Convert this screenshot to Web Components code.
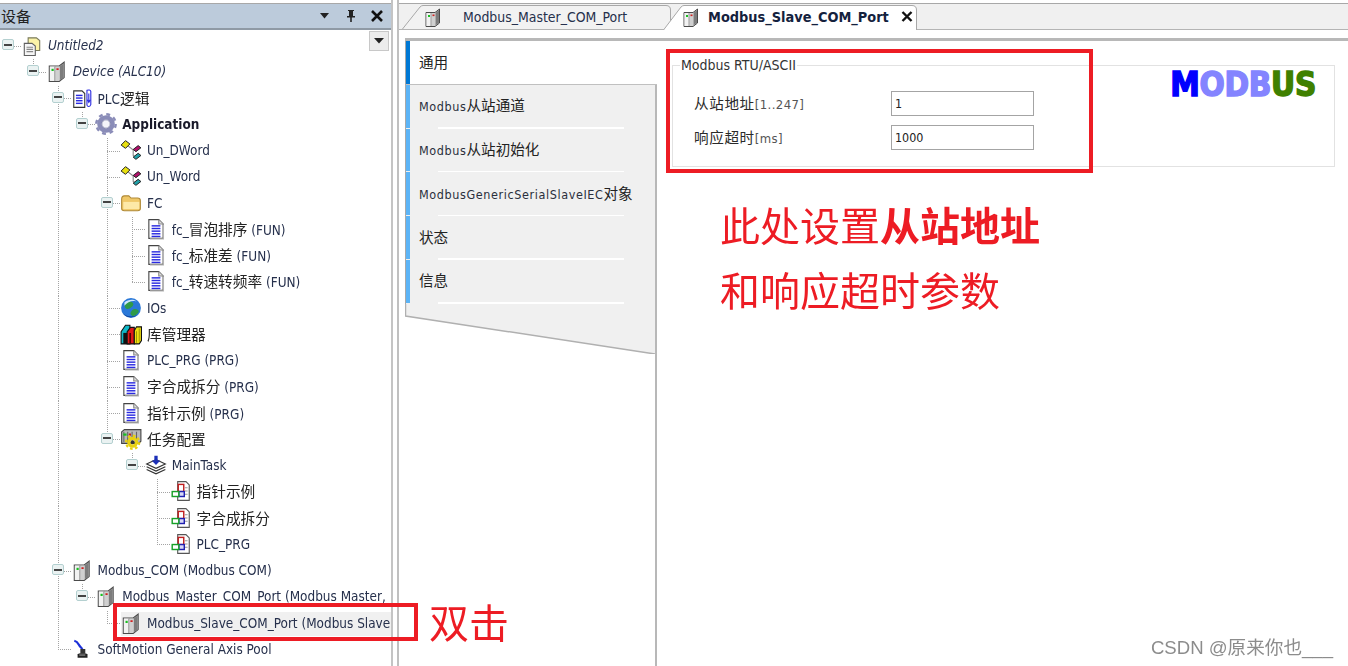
<!DOCTYPE html>
<html lang="zh">
<head>
<meta charset="utf-8">
<title>Modbus_Slave_COM_Port</title>
<style>
  html, body { margin: 0; height: 666px; overflow: hidden; background: #fff; }
  body { font-family: "DejaVu Sans Condensed", "DejaVu Sans", "Noto Sans CJK SC", sans-serif; font-stretch: condensed; color: #222; position: relative; }
</style>
</head>
<body>
<app-shell>
  <device-panel slot="left" heading="设备">
    <device-tree>
      <tree-row level="0" icon="project" open italic>Untitled2</tree-row>
      <tree-row level="1" icon="device" open italic>Device (ALC10)</tree-row>
      <tree-row level="2" icon="logic" open>PLC<span>逻辑</span></tree-row>
      <tree-row level="3" icon="gear" open bold>Application</tree-row>
      <tree-row level="4" icon="union">Un_DWord</tree-row>
      <tree-row level="4" icon="union">Un_Word</tree-row>
      <tree-row level="4" icon="folder" open>FC</tree-row>
      <tree-row level="5" icon="page">fc_<span>冒泡排序</span> (FUN)</tree-row>
      <tree-row level="5" icon="page">fc_<span>标准差</span> (FUN)</tree-row>
      <tree-row level="5" icon="page">fc_<span>转速转频率</span> (FUN)</tree-row>
      <tree-row level="4" icon="globe">IOs</tree-row>
      <tree-row level="4" icon="books"><span>库管理器</span></tree-row>
      <tree-row level="4" icon="page">PLC_PRG (PRG)</tree-row>
      <tree-row level="4" icon="page"><span>字合成拆分</span> (PRG)</tree-row>
      <tree-row level="4" icon="page"><span>指针示例</span> (PRG)</tree-row>
      <tree-row level="4" icon="taskcfg" open><span>任务配置</span></tree-row>
      <tree-row level="5" icon="task" open>MainTask</tree-row>
      <tree-row level="6" icon="call"><span>指针示例</span></tree-row>
      <tree-row level="6" icon="call"><span>字合成拆分</span></tree-row>
      <tree-row level="6" icon="call">PLC_PRG</tree-row>
      <tree-row level="2" icon="device" open>Modbus_COM (Modbus COM)</tree-row>
      <tree-row level="3" icon="device" open>Modbus_Master_COM_Port (Modbus Master,</tree-row>
      <tree-row level="4" icon="device" selected>Modbus_Slave_COM_Port (Modbus Slave</tree-row>
      <tree-row level="2" icon="axis">SoftMotion General Axis Pool</tree-row>
    </device-tree>
  </device-panel>

  <editor-pane slot="right">
    <editor-tab slot="tabs" width="270" icon-gap="22">Modbus_Master_COM_Port</editor-tab>
    <editor-tab slot="tabs" width="255" icon-gap="19" active>Modbus_Slave_COM_Port</editor-tab>
    <side-nav slot="nav">
      <nav-item active><span>通用</span></nav-item>
      <nav-item>Modbus<span>从站通道</span></nav-item>
      <nav-item>Modbus<span>从站初始化</span></nav-item>
      <nav-item>ModbusGenericSerialSlaveIEC<span>对象</span></nav-item>
      <nav-item><span>状态</span></nav-item>
      <nav-item><span>信息</span></nav-item>
    </side-nav>
    <settings-group legend="Modbus RTU/ASCII">
      <field-row value="1"><span>从站地址</span>[1..247]</field-row>
      <field-row value="1000"><span>响应超时</span>[ms]</field-row>
    </settings-group>
  </editor-pane>
</app-shell>

<mark-frame box="666,49,427,124"></mark-frame>
<mark-frame box="113,603,305,38"></mark-frame>
<mark-text at="720,200">此处设置<b>从站地址</b></mark-text>
<mark-text at="720,265">和响应超时参数</mark-text>
<mark-text at="429,597">双击</mark-text>
<water-mark>CSDN @原来你也___</water-mark>

<script>
const deviceIcon = `
  <path d="M3 5.500 12 5.500 16.500 2 16.500 16 12 19.500 3 19.500Z" fill="#dcdcdc" stroke="#4a4a4a"/>
  <path d="M3.500 6H8V19H3.500Z" fill="#f2f2f2"/><path d="M8.500 6H12V19H8.500Z" fill="#d0d0d0"/>
  <path d="M12.500 5.800 16 3V15.800L12.500 18.600Z" fill="#7c7c7c"/>
  <path d="M8 6V19" stroke="#9a9a9a"/>
  <rect x="5" y="8" width="2" height="2" fill="#18c020"/><rect x="9.500" y="7.500" width="2" height="1.600" fill="#d02020"/>`;
const pageLines = (x, y, n, w) => {
  let s = '';
  for (let i = 0; i < n; i++) s += `<rect x="${x}" y="${y + i * 2.4}" width="${w}" height="1.3" fill="#2a2ae0"/>`;
  return s;
};
const icons = {
  project: `<path d="M6.500 3.500H14L17 6V15H6.500Z" fill="#fbf3a8" stroke="#7a7a5a"/>
    <path d="M3 8.500H10L13 11V19.500H3Z" fill="#f6f6f6" stroke="#606060"/>
    <path d="M5 12H11M5 14H11M5 16H11" stroke="#888"/>`,
  device: deviceIcon,
  logic: `<path d="M2.500 3.500H10L12.500 6V18.500H2.500Z" fill="#fff" stroke="#333"/>${pageLines(4.5, 7, 4, 6)}
    <path d="M14.500 3C16 2.500 17.500 2.500 18 4V16C17 18.500 15 18 14.500 16.500Z" fill="#fff" stroke="#2a2ae0"/>
    <path d="M16.200 6V13M14.800 11.500 16.200 14 17.600 11.500" fill="none" stroke="#2a2ae0"/>`,
  gear: `<circle cx="10" cy="10" r="6" fill="none" stroke="#8a8cb8" stroke-width="4"/>
    <circle cx="10" cy="10" r="8.800" fill="none" stroke="#8a8cb8" stroke-width="2.200" stroke-dasharray="3.500 3.410"/>
    <circle cx="10" cy="10" r="3.800" fill="#f4f4fa" stroke="#666a96" stroke-width=".6"/>`,
  union: `<path d="M7 6 12 10M12 10V15L15 17" fill="none" stroke="#888"/>
    <path d="M1 5.500 5 1.500 9 4.500 5 8.500Z" fill="#e8e010" stroke="#222" stroke-width=".9"/>
    <path d="M12 9.500 16.500 6 19 8 14.500 11.500Z" fill="#b0106a" stroke="#222" stroke-width=".9"/>
    <path d="M12 16.500 16.500 13 19 15 14.500 18.500Z" fill="#20a0a8" stroke="#222" stroke-width=".9"/>`,
  folder: `<path d="M1.500 6.500C1.500 4.500 2.500 3.500 4 3.500H8L10 5.500H16C17.500 5.500 18.500 6.500 18.500 8V15C18.500 16.500 17.500 17 16 17H4C2.500 17 1.500 16.500 1.500 15Z" fill="#f0c868" stroke="#b08a38"/>
    <path d="M3 9H17.500V15.500H3Z" fill="#fde9a8"/>`,
  page: `<path d="M3.500 1.500H12.500L16.500 5.500V18.500H3.500Z" fill="#fff" stroke="#444"/>
    <path d="M12.500 1.500V5.500H16.500" fill="#ddd" stroke="#888"/>
    <path d="M16.800 6V19H4.500" fill="none" stroke="#b4b4b4"/>${pageLines(6, 6.500, 5, 8)}`,
  globe: `<circle cx="10" cy="10" r="9" fill="#2a78d8"/>
    <path d="M5 5C8 3 11 4 12 6S9 11 7 11 3 8 5 5ZM11 12C13 10 17 11 17 13S13 18 11 17 9 14 11 12Z" fill="#2f9a48"/>
    <path d="M4 5C7 2 13 2 15 4 11 3 7 4 4 8Z" fill="#cfe8ff"/>
    <path d="M2 14C5 18 12 19 16 16 13 19 6 20 2 14Z" fill="#0d3c90"/>`,
  books: `<path d="M1 8 5 2H9V19H1Z" fill="#0fb8c8" stroke="#111"/>
    <path d="M3 9H6.500V19H3Z" fill="#111"/>
    <path d="M6.500 8 9.500 4H13V19H6.500Z" fill="#e01818" stroke="#111"/>
    <path d="M8.500 9H10V19H8.500Z" fill="#500"/>
    <path d="M13 7 15 3.500H19.500V16L17.500 19H13Z" fill="#f0e010" stroke="#111"/>
    <path d="M15 7.500V18M17.500 5V17" stroke="#8a8000" stroke-width=".7"/>`,
  taskcfg: `<path d="M1.500 3.500 4 1.500H19V12L17 14H1.500Z" fill="#b8b8b8" stroke="#444"/>
    <path d="M3.500 3.500V13M7 3.500V13M11 3.500V13M15 3.500V13" stroke="#666"/>
    <rect x="3" y="5" width="3" height="2" fill="#18c020"/><rect x="8" y="5" width="2" height="2" fill="#c02020"/>
    <circle cx="11.500" cy="13" r="3.500" fill="none" stroke="#e8d010" stroke-width="3"/>
    <circle cx="11.500" cy="13" r="6" fill="none" stroke="#e8d010" stroke-width="2" stroke-dasharray="2.400 2.300"/>
    <circle cx="11.500" cy="13" r="1.700" fill="#333"/>`,
  task: `<path d="M1.500 9 10 5 18.500 9 10 13Z" fill="#fff" stroke="#333"/>
    <path d="M1.500 11.500 10 15.500 18.500 11.500M1.500 14 10 18 18.500 14" fill="none" stroke="#333"/>
    <path d="M8.500 1.500H11.500V6H14L10 10 6 6H8.500Z" fill="#1c30b8"/>`,
  call: `<path d="M7 1.500H14.500L17.500 4.500V18.500H7Z" fill="#fff" stroke="#555"/>
    <path d="M13.500 7H16M13.500 10H16M13.500 13H16" stroke="#999"/>
    <rect x="7.500" y="4" width="5" height="6.500" fill="#fff" stroke="#c02020" stroke-width="1.300"/>
    <rect x="8" y="10.500" width="5" height="4.500" fill="#d8d8f8" stroke="#2020b0" stroke-width="1.300"/>
    <rect x="2" y="10.500" width="6" height="4.500" fill="#fff" stroke="#18a028" stroke-width="1.300"/>`,
  axis: `<path d="M3 2.500C5 3 6 4 7 6S9.500 9 10.500 10" fill="none" stroke="#1c30d8" stroke-width="2"/>
    <path d="M8.500 10H13V14H8.500Z" fill="#333"/><path d="M6 15C6 13.500 15 13.500 15 15V18H6Z" fill="#222"/>
    <path d="M7.500 15.500H13" stroke="#999"/>`
};

class AppShell extends HTMLElement {
  constructor() {
    super();
    this.attachShadow({ mode: 'open' }).innerHTML = `
      <style>
        :host { display: flex; height: 666px; filter: blur(.42px); }
        .left { width: 393px; flex: none; }
        .right { flex: 1; min-width: 0; }
      </style>
      <div class="left"><slot name="left"></slot></div>
      <div class="right"><slot name="right"></slot></div>`;
  }
}

class DevicePanel extends HTMLElement {
  constructor() {
    super();
    this.attachShadow({ mode: 'open' }).innerHTML = `
      <style>
        :host { display: flex; flex-direction: column; height: 666px; box-sizing: border-box; border-right: 2px solid #c4c4c4; background: #fff; overflow: hidden; }
        .title { height: 27px; margin-top: 3px; flex: none; display: flex; align-items: center; box-sizing: border-box;
                 background: #bccbdb; border-top: 1px solid #a8a8a8; border-bottom: 2px solid #8f9aa5; padding: 0 1px 1px 1px; font-size: 15px; color: #222; font-family: "Noto Sans CJK SC", sans-serif; }
        .name { flex: 1; }
        .btn { width: 26px; display: flex; justify-content: center; }
        .tree { flex: 1; position: relative; padding-top: 3px; }
        .drop { position: absolute; top: 1px; right: 2px; width: 20px; height: 20px; box-sizing: border-box; background: #ececec; border: 1px solid #c8c8c8;
                display: flex; align-items: center; justify-content: center; }
      </style>
      <div class="title">
        <span class="name"></span>
        <span class="btn"><svg width="12" height="8" viewBox="0 0 12 8"><path d="M1 1H10L5.500 6.500Z" fill="#222"/></svg></span>
        <span class="btn"><svg width="12" height="14" viewBox="0 0 12 14"><path d="M3 1H9V2H8V7H10V8.500H6.800V13H5.200V8.500H2V7H4V2H3Z" fill="#222"/></svg></span>
        <span class="btn"><svg width="14" height="12" viewBox="0 0 14 12"><path d="M2 1 12 11M12 1 2 11" stroke="#111" stroke-width="2.600"/></svg></span>
      </div>
      <div class="tree">
        <slot></slot>
        <div class="drop"><svg width="12" height="8" viewBox="0 0 12 8"><path d="M1 1H11L6 6.500Z" fill="#222"/></svg></div>
      </div>`;
    this.shadowRoot.querySelector('.name').textContent = this.getAttribute('heading');
  }
}

class DeviceTree extends HTMLElement {
  constructor() {
    super();
    this.attachShadow({ mode: 'open' }).innerHTML = `<style>:host { display: block; }</style><slot></slot>`;
  }
  connectedCallback() {
    const rows = [...this.querySelectorAll('tree-row')];
    const lvl = rows.map(r => +r.getAttribute('level'));
    // does level l carry on below row i
    const continues = (i, l) => {
      for (let j = i + 1; j < rows.length; j++) {
        if (lvl[j] < l) return false;
        if (lvl[j] === l) return true;
      }
      return false;
    };
    const dotV = 'repeating-linear-gradient(#a4a4a4 0 1px,transparent 1px 2px)';
    const dotH = 'repeating-linear-gradient(90deg,#a4a4a4 0 1px,transparent 1px 2px)';
    rows.forEach((row, i) => {
      const l = lvl[i];
      const imgs = [], pos = [], size = [];
      const add = (img, p, s) => { imgs.push(img); pos.push(p); size.push(s); };
      const cx = a => Math.round(8 + a * 24.75);
      for (let a = 1; a < l; a++) {
        if (continues(i, a)) add(dotV, `${cx(a)}px 0`, '1px 100%');
      }
      if (l > 0) add(dotV, `${cx(l)}px 0`, continues(i, l) ? '1px 100%' : '1px 50%');
      add(dotH, `${cx(l)}px 50%`, '13px 1px');
      row.style.backgroundImage = imgs.join(',');
      row.style.backgroundPosition = pos.join(',');
      row.style.backgroundSize = size.join(',');
      row.style.backgroundRepeat = 'no-repeat';
    });
  }
}

const rowTemplate = document.createElement('template');
rowTemplate.innerHTML = `
  <style>
    :host { display: block; height: 26.25px; font-size: 13.45px; line-height: 16px; color: #26304c; white-space: nowrap; }
    .row { height: 100%; display: flex; align-items: center; box-sizing: border-box; padding-left: calc(var(--level) * 24.75px + 2px); }
    .exp { width: 20px; flex: none; display: flex; }
    .box { width: 12px; height: 11px; box-sizing: border-box; border: 1px solid #b4d0d0; border-radius: 2px; background: #eaf2f2; display: flex; align-items: center; justify-content: center; margin-top: -3px; }
    .box i { display: block; width: 8px; height: 2px; background: #444; }
    :host(:not([open])) .box { visibility: hidden; }
    .main { flex: 1; height: 24px; display: flex; align-items: center; min-width: 0; }
    :host([selected]) .main { background: #f0f0f0; }
    svg { width: 22px; height: 22px; flex: none; margin: -2px -1px 0; }
    .label { margin-left: 6px; }
    :host([italic]) .label { font-style: italic; }
    :host([bold]) .label { font-weight: bold; color: #1a1a2a; }
    ::slotted(span) { font-size: 14.7px; color: #222; line-height: 16px; font-family: "Noto Sans CJK SC", sans-serif; }
  </style>
  <div class="row">
    <span class="exp"><span class="box"><i></i></span></span>
    <span class="main"><svg viewBox="0 0 20 20"></svg><span class="label"><slot></slot></span></span>
  </div>`;

class TreeRow extends HTMLElement {
  constructor() {
    super();
    this.attachShadow({ mode: 'open' }).appendChild(rowTemplate.content.cloneNode(true));
    this.shadowRoot.querySelector('svg').innerHTML = icons[this.getAttribute('icon')] || '';
    this.style.setProperty('--level', this.getAttribute('level'));
  }
}

class EditorPane extends HTMLElement {
  constructor() {
    super();
    this.attachShadow({ mode: 'open' }).innerHTML = `
      <style>
        :host { display: flex; flex-direction: column; height: 666px; margin-left: 4px; box-sizing: border-box; border-left: 2px solid #c0c0c0; background: #fff; }
        .tabs { height: 25px; margin-top: 3px; flex: none; display: flex; align-items: stretch; padding-left: 3px; box-sizing: content-box;
                background: #f0f0f0; border-top: 1px solid #a8a8a8; border-bottom: 1px solid #b4b4b4; }
        .body { flex: 1; display: flex; flex-direction: column; padding: 8px 0 0 6px; min-height: 0; }
        .inner { flex: 1; display: flex; border-top: 3px solid #b8b8b8; min-height: 0; }
        .form { flex: 1; padding: 16px 13px 0 15px; min-width: 0; }
      </style>
      <div class="tabs"><slot name="tabs"></slot></div>
      <div class="body"><div class="inner">
        <slot name="nav"></slot>
        <div class="form"><slot></slot></div>
      </div></div>`;
  }
}

class EditorTab extends HTMLElement {
  constructor() {
    super();
    const w = +this.getAttribute('width');
    const active = this.hasAttribute('active');
    const fill = active ? '#fff' : '#f2f2f2';
    this.attachShadow({ mode: 'open' }).innerHTML = `
      <style>
        :host { display: flex; align-items: center; position: relative; flex: none; height: 25px; width: ${w}px; font-size: 13.9px; color: #26304c; }
        :host([active]) { margin-left: -9px; z-index: 1; font-size: 14.4px; font-weight: bold; color: #14213d; }
        .shape { position: absolute; left: 0; top: 0; }
        .icon { position: relative; width: 20px; height: 20px; margin-left: ${this.getAttribute('icon-gap') - 1}px; flex: none; }
        .text { position: relative; margin-left: ${active ? 7 : 20}px; }
        .close { position: relative; margin-left: 12px; }
      </style>
      <svg class="shape" width="${w}" height="26" viewBox="0 0 ${w} 26">
        <path d="M0.500 ${active ? 26 : 25}L18 3Q19.500 1.500 21 1.500H${w - 6}Q${w - 1.500} 1.500 ${w - 1.500} 6V${active ? 26 : 25}" fill="${fill}" stroke="#a8a8a8"/>
      </svg>
      <svg class="icon" viewBox="0 0 20 20">${deviceIcon}</svg>
      <span class="text"><slot></slot></span>
      ${active ? '<svg class="close" width="12" height="11" viewBox="0 0 12 11"><path d="M1.500 1 10.500 10M10.500 1 1.500 10" stroke="#111" stroke-width="2.400"/></svg>' : ''}`;
  }
}

class SideNav extends HTMLElement {
  constructor() {
    super();
    this.attachShadow({ mode: 'open' }).innerHTML = `
      <style>
        :host { display: flex; flex-direction: column; width: 252px; flex: none; }
        .list { border-left: 1px solid #a8a8a8; }
        svg { display: block; flex: none; }
        .rest { flex: 1; margin-left: 250px; border-right: 2px solid #b8b8b8; }
      </style>
      <div class="list"><slot></slot></div>
      <svg width="252" height="50" viewBox="0 0 252 50">
        <path d="M.5 0V12L250 50V0Z" fill="#f0f0f0"/>
        <path d="M.5 0V12L250 50" fill="none" stroke="#b0b0b0" stroke-width="1.500"/>
        <path d="M251 0V50" stroke="#b8b8b8" stroke-width="2"/>
      </svg>
      <div class="rest"></div>`;
  }
}

class NavItem extends HTMLElement {
  constructor() {
    super();
    this.attachShadow({ mode: 'open' }).innerHTML = `
      <style>
        :host { display: flex; flex-direction: column; height: 43.75px; box-sizing: border-box; font-size: 12.5px; color: #2a2f3c; white-space: nowrap;
                background: linear-gradient(#5cb4f6, #5cb4f6) left top / 4px calc(100% - 1px) no-repeat, #f0f0f0; border-right: 2px solid #b8b8b8; }
        :host([active]) { background: linear-gradient(#0078d4, #0078d4) left top / 4px 100% no-repeat, #fff; border-right: none; border-bottom: 1px solid #c0c0c0; }
        .text { flex: 1; display: flex; align-items: center; padding: 0 0 2px 13px; letter-spacing: .6px; }
        .sep { height: 1.500px; width: 186px; margin-left: 32px; background: #fff; flex: none; }
        :host([active]) .sep { display: none; }
        ::slotted(span) { font-size: 14.6px; letter-spacing: 0; color: #222; font-family: "Noto Sans CJK SC", sans-serif; }
      </style>
      <div class="text"><span><slot></slot></span></div>
      <div class="sep"></div>`;
  }
}

class SettingsGroup extends HTMLElement {
  constructor() {
    super();
    this.attachShadow({ mode: 'open' }).innerHTML = `
      <style>
        :host { display: block; }
        fieldset { height: 110px; box-sizing: border-box; margin: 0; padding: 18px 18px 0 21px; border: 1.500px solid #e2e2e2; display: flex; justify-content: space-between; align-items: flex-start; }
        legend { font-size: 14px; line-height: 16px; padding: 0 1px; margin-left: -14px; color: #333; }
        .rows { display: flex; flex-direction: column; gap: 9px; }
        .logo { font-size: 33px; line-height: 26px; height: 26px; font-weight: bold; letter-spacing: -.3px; -webkit-text-stroke: 1.400px currentColor; margin-top: -19px; }
        .m { color: #0000ff; } .o { color: #8484ff; } .u { color: #3f8000; }
      </style>
      <fieldset>
        <legend></legend>
        <div class="rows"><slot></slot></div>
        <div class="logo"><span class="m">M</span><span class="o">ODB</span><span class="u">US</span></div>
      </fieldset>`;
    this.shadowRoot.querySelector('legend').textContent = this.getAttribute('legend');
  }
}

class FieldRow extends HTMLElement {
  constructor() {
    super();
    this.attachShadow({ mode: 'open' }).innerHTML = `
      <style>
        :host { display: flex; align-items: center; height: 25px; font-size: 13px; color: #555; }
        .label { width: 197px; flex: none; padding-bottom: 3px; box-sizing: border-box; letter-spacing: .4px; }
        ::slotted(span) { font-size: 14.6px; letter-spacing: .6px; color: #2a2a2a; font-family: "Noto Sans CJK SC", sans-serif; }
        .input { width: 143px; height: 25px; box-sizing: border-box; border: 1.500px solid #a4a4a4; padding: 0 3px; display: flex; align-items: center; font-size: 12.400px; color: #222; background: #fff; }
      </style>
      <span class="label"><slot></slot></span>
      <div class="input"></div>`;
    this.shadowRoot.querySelector('.input').textContent = this.getAttribute('value');
  }
}

class MarkFrame extends HTMLElement {
  constructor() {
    super();
    const [x, y, w, h] = this.getAttribute('box').split(',');
    this.attachShadow({ mode: 'open' }).innerHTML = `
      <style>
        :host { display: block; position: absolute; left: ${x}px; top: ${y}px; width: ${w}px; height: ${h}px; box-sizing: border-box; border: 4px solid #ed1c24; }
      </style>`;
  }
}

class MarkText extends HTMLElement {
  constructor() {
    super();
    const [x, y] = this.getAttribute('at').split(',');
    this.attachShadow({ mode: 'open' }).innerHTML = `
      <style>
        :host { display: block; position: absolute; left: ${x}px; top: ${y}px; font-size: 40px; line-height: 48px; color: #ed1c24; white-space: nowrap; font-family: "Noto Sans CJK SC", sans-serif; }
      </style><slot></slot>`;
  }
}

class WaterMark extends HTMLElement {
  constructor() {
    super();
    this.attachShadow({ mode: 'open' }).innerHTML = `
      <style>
        :host { display: block; position: absolute; right: 15px; top: 636px; font-size: 18.6px; line-height: 24px; color: #8c8c8c; white-space: nowrap; font-family: "Liberation Sans", "Noto Sans CJK SC", sans-serif; font-stretch: normal; }
      </style><slot></slot>`;
  }
}

customElements.define('tree-row', TreeRow);
customElements.define('device-tree', DeviceTree);
customElements.define('device-panel', DevicePanel);
customElements.define('editor-tab', EditorTab);
customElements.define('nav-item', NavItem);
customElements.define('side-nav', SideNav);
customElements.define('field-row', FieldRow);
customElements.define('settings-group', SettingsGroup);
customElements.define('editor-pane', EditorPane);
customElements.define('app-shell', AppShell);
customElements.define('mark-frame', MarkFrame);
customElements.define('mark-text', MarkText);
customElements.define('water-mark', WaterMark);
</script>
</body>
</html>
